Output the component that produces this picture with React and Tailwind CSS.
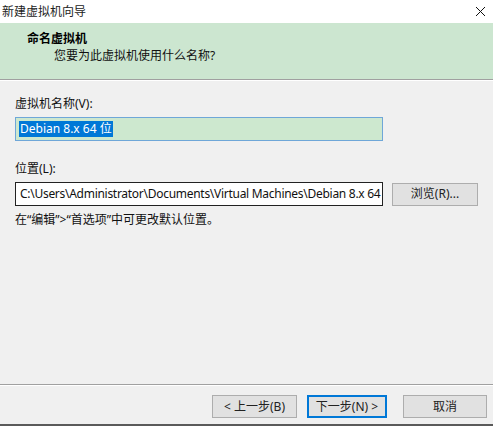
const font = { fontFamily: '"Noto Sans", "Noto Sans CJK SC", sans-serif' };

const Btn = ({ children, primary, className = "" }) => (
    <div
        className={
            "h-[23px] flex items-center justify-center text-[12px] text-[#222] bg-[#e1e1e1] " +
            (primary ? "border-2 border-[#0078d7] " : "border border-[#adadad] ") +
            className
        }
    >
        {children}
    </div>
);

export default function App() {
    return (
        <div className="w-[493px] h-[426px] bg-[#f0f0f0] flex flex-col border-b-2 border-[#5a5a5a] overflow-hidden text-[#111]" style={font}>
            {/* title bar */}
            <div className="h-[23px] bg-white flex items-center justify-between pl-[2px] pr-[7px]">
                <span className="text-[12px] text-[#222]">新建虚拟机向导</span>
                <svg width="11" height="11" viewBox="0 0 11 11">
                    <path d="M1 1L10 10M10 1L1 10" stroke="#111" strokeWidth="1" />
                </svg>
            </div>

            {/* header */}
            <div className="h-[57px] bg-[#cce6d0] border-b border-[#a0a0a0] flex flex-col pl-[27px] pt-[8px]">
                <div className="text-[12px] font-bold leading-[16px] text-black">命名虚拟机</div>
                <div className="text-[12px] leading-[16px] pl-[27px] mt-[1px] text-[#111]">您要为此虚拟机使用什么名称?</div>
            </div>

            {/* body */}
            <div className="flex-1 flex flex-col px-[15px] pt-[15px] border-t border-white">
                <div className="text-[12px] leading-[16px]">虚拟机名称(V):</div>
                <div className="mt-[5px] w-[368px] h-[24px] border border-[#6fa7d8] bg-[#cde8cf] flex items-center px-[3px]">
                    <span className="bg-[#0078d7] text-white text-[12px] leading-[16px] px-[1px]">Debian 8.x 64 位</span>
                </div>

                <div className="text-[12px] leading-[16px] mt-[20px]">位置(L):</div>
                <div className="mt-[5px] flex items-center gap-[9px]">
                    <div className="w-[368px] h-[24px] border border-[#222] bg-white flex items-center px-[4px] overflow-hidden whitespace-nowrap">
                        <span className="text-[12px] leading-[16px] tracking-[-0.28px]">C:\Users\Administrator\Documents\Virtual Machines\Debian 8.x 64</span>
                    </div>
                    <Btn className="w-[86px]">浏览(R)...</Btn>
                </div>
                <div className="text-[12px] leading-[16px] mt-[6px]">在“编辑”&gt;“首选项”中可更改默认位置。</div>
            </div>

            {/* footer */}
            <div className="h-[40px] border-t border-[#a0a0a0] flex flex-col">
                <div className="border-t border-white flex-1 flex items-start justify-end gap-[10px] pt-[9px] pr-[6px]">
                    <Btn className="w-[85px]">&lt; 上一步(B)</Btn>
                    <Btn primary className="w-[80px]">下一步(N) &gt;</Btn>
                    <Btn className="w-[84px] ml-[6px]">取消</Btn>
                </div>
            </div>
        </div>
    );
}
